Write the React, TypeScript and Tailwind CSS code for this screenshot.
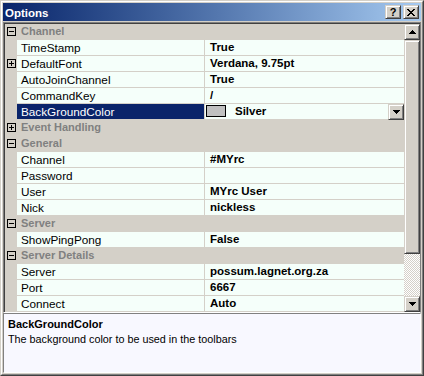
import React from 'react';

type Row =
  | { k: 'cat'; label: string; open: boolean }
  | { k: 'prop'; name: string; value: string; plus?: boolean; sel?: boolean };

const rows: Row[] = [
  { k: 'cat', label: 'Channel', open: true },
  { k: 'prop', name: 'TimeStamp', value: 'True' },
  { k: 'prop', name: 'DefaultFont', value: 'Verdana, 9.75pt', plus: true },
  { k: 'prop', name: 'AutoJoinChannel', value: 'True' },
  { k: 'prop', name: 'CommandKey', value: '/' },
  { k: 'prop', name: 'BackGroundColor', value: 'Silver', sel: true },
  { k: 'cat', label: 'Event Handling', open: false },
  { k: 'cat', label: 'General', open: true },
  { k: 'prop', name: 'Channel', value: '#MYrc' },
  { k: 'prop', name: 'Password', value: '' },
  { k: 'prop', name: 'User', value: 'MYrc User' },
  { k: 'prop', name: 'Nick', value: 'nickless' },
  { k: 'cat', label: 'Server', open: true },
  { k: 'prop', name: 'ShowPingPong', value: 'False' },
  { k: 'cat', label: 'Server Details', open: true },
  { k: 'prop', name: 'Server', value: 'possum.lagnet.org.za' },
  { k: 'prop', name: 'Port', value: '6667' },
  { k: 'prop', name: 'Connect', value: 'Auto' },
];

const raised =
  'bg-[#d4d0c8] border border-t-[#d4d0c8] border-l-[#d4d0c8] border-r-[#404040] border-b-[#404040] shadow-[inset_1px_1px_#ffffff,inset_-1px_-1px_#808080]';

function Box({ plus }: { plus: boolean }) {
  return (
    <svg width="9" height="9" viewBox="0 0 9 9" className="block" shapeRendering="crispEdges">
      <rect x="0.5" y="0.5" width="8" height="8" fill="none" stroke="#000" />
      <rect x="2" y="4" width="5" height="1" fill="#000" />
      {plus && <rect x="4" y="2" width="1" height="5" fill="#000" />}
    </svg>
  );
}

function Tri({ up }: { up?: boolean }) {
  const r = up
    ? [
        [3, 0, 1],
        [2, 1, 3],
        [1, 2, 5],
        [0, 3, 7],
      ]
    : [
        [0, 0, 7],
        [1, 1, 5],
        [2, 2, 3],
        [3, 3, 1],
      ];
  return (
    <svg width="7" height="4" viewBox="0 0 7 4" className="block" shapeRendering="crispEdges">
      {r.map(([x, y, w], i) => (
        <rect key={i} x={x} y={y} width={w} height="1" fill="#000" />
      ))}
    </svg>
  );
}

export default function App() {
  return (
    <div className="w-[424px] h-[376px] bg-[#d4d0c8] border border-t-[#d4d0c8] border-l-[#d4d0c8] border-r-[#404040] border-b-[#404040] font-['Liberation_Sans',Arial,sans-serif] text-black overflow-hidden">
      <div className="h-full border border-t-white border-l-white border-r-[#808080] border-b-[#808080] p-px flex flex-col">
        {/* Title bar */}
        <div className="h-[18px] shrink-0 flex items-center bg-linear-to-r from-[#0a246a] to-[#a6caf0] pl-[2px] pr-[2px]">
          <span className="text-white font-bold text-[11.5px] leading-[14px] pt-[2px]">Options</span>
          <div className="ml-auto flex gap-[2px]">
            <div className={`w-[16px] h-[14px] flex items-center justify-center ${raised}`}>
              <span className="font-bold text-[11px] leading-none text-black">?</span>
            </div>
            <div className={`w-[16px] h-[14px] flex items-center justify-center ${raised}`}>
              <svg width="8" height="7" viewBox="0 0 8 7" className="block" shapeRendering="crispEdges">
                {[0, 1, 2, 3, 4, 5, 6].map((i) => (
                  <React.Fragment key={i}>
                    <rect x={i} y={i} width="2" height="1" fill="#000" />
                    <rect x={6 - i} y={i} width="2" height="1" fill="#000" />
                  </React.Fragment>
                ))}
              </svg>
            </div>
          </div>
        </div>
        <div className="h-px shrink-0" />
        {/* Property grid */}
        <div className="shrink-0 border-t border-l border-r border-b border-t-[#808080] border-l-[#808080] border-r-[#808080] border-b-white">
          <div className="flex border-t border-l border-t-[#404040] border-l-[#404040]">
            <div className="w-[399px] flex flex-col">
              {rows.map((r, i) =>
                r.k === 'cat' ? (
                  <div key={i} className="flex h-[16px] bg-[#d4d0c8]">
                    <div className="w-[12px] pl-[2px] pt-[3px]">
                      <Box plus={!r.open} />
                    </div>
                    <div className="pl-[4px] font-bold text-[11px] leading-[15px] text-[#808080] whitespace-nowrap">
                      {r.label}
                    </div>
                  </div>
                ) : (
                  <div key={i} className="flex h-[16px]">
                    <div className="w-[12px] bg-[#d4d0c8] pl-[2px] pt-[3px]">{r.plus && <Box plus />}</div>
                    <div className="w-[387px] flex flex-col">
                      <div className="flex h-[15px]">
                        <div
                          className={`w-[187px] pl-[4px] text-[11.75px] leading-[15px] whitespace-nowrap ${
                            r.sel ? 'bg-[#0a246a] text-white' : 'bg-[#f5fffa]'
                          }`}
                        >
                          {r.name}
                        </div>
                        <div className="w-px bg-[#d4d0c8]" />
                        {r.sel ? (
                          <div className="relative w-[199px] bg-[#f5fffa] flex items-start">
                            <div className="ml-px mt-px w-[20px] h-[12px] border border-black bg-[#c0c0c0]" />
                            <span className="ml-[9px] font-bold text-[11.5px] leading-[15px]">{r.value}</span>
                            <div className={`absolute right-0 top-0 w-[16px] h-[16px] flex items-center justify-center ${raised}`}>
                              <Tri />
                            </div>
                          </div>
                        ) : (
                          <div className="w-[199px] bg-[#f5fffa] pl-[5px] font-bold text-[11.5px] leading-[15px] whitespace-nowrap">
                            {r.value}
                          </div>
                        )}
                      </div>
                      <div className="h-px bg-[#d4d0c8]" />
                    </div>
                  </div>
                )
              )}
            </div>
            {/* Scrollbar */}
            <div className="w-[16px] flex flex-col">
              <div className={`h-[16px] flex items-center justify-center ${raised}`}>
                <Tri up />
              </div>
              <div className={`h-[214px] ${raised}`} />
              <div className="flex-1 bg-[repeating-conic-gradient(#ffffff_0%_25%,#d4d0c8_0%_50%)] bg-size-[2px_2px]" />
              <div className={`h-[16px] flex items-center justify-center ${raised}`}>
                <Tri />
              </div>
            </div>
          </div>
        </div>
        {/* Description */}
        <div className="flex-1 border border-t-[#808080] border-l-[#808080] border-r-white border-b-white bg-[#f8f8ff] pl-[4px] pt-[3px]">
          <div className="font-bold text-[11px] leading-[14px]">BackGroundColor</div>
          <div className="text-[10.8px] leading-[14px] mt-px">The background color to be used in the toolbars</div>
        </div>
      </div>
    </div>
  );
}
